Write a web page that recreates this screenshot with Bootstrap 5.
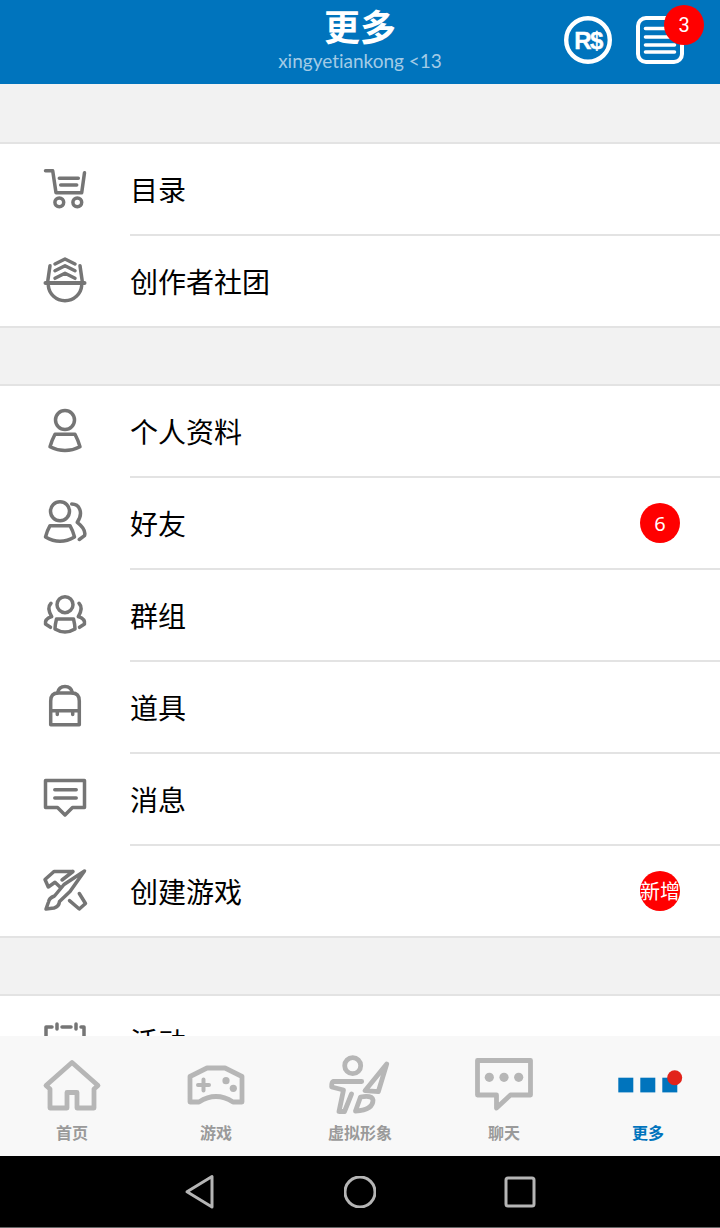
<!DOCTYPE html>
<html lang="zh-CN">
<head>
<meta charset="utf-8">
<title>更多</title>
<link href="https://cdn.jsdelivr.net/npm/bootstrap@5.3.0/dist/css/bootstrap.min.css" rel="stylesheet">
<style>
html,body{height:100%;overflow:hidden}
body{font-family:"Noto Sans CJK SC","Noto Sans",sans-serif;background:#f2f2f2;color:#000}
.app-shell{height:1228px}
.app-head{height:84px;background:#0074bd;color:#fff;flex:none;grid-template-columns:1fr auto 1fr}
.head-title{font-size:36px;font-weight:700;line-height:40px;margin-top:5px}
.head-sub{font-family:"Lato","Noto Sans",sans-serif;font-size:19px;line-height:26px;color:#a3cbe6;margin-top:3px;font-variant-ligatures:none}
.head-tools{padding-right:36px;gap:24px;padding-top:16px}
.coin-ico{display:block}
.notes-wrap{width:48px;height:48px}
.red-dot{position:absolute;width:40px;height:40px;border-radius:50%;background:#f00;color:#fff;right:-20px;top:-11px;font:20px/40px "Roboto",sans-serif;text-align:center}
.scroll-area{flex:1 1 0;min-height:0;overflow:hidden}
.gap-band{height:58px}
.sheet{background:#fff;border-top:2px solid #e3e3e3;border-bottom:2px solid #e3e3e3}
.sheet+.gap-band{height:56px}
.sheet-row{height:90px}
.sheet-row+.sheet-row{height:92px}
.sheet-row+.sheet-row .row-body{border-top:2px solid #e3e3e3}
.row-ico{width:130px;flex:none;padding-left:41px}
.row-body{font-size:28px;line-height:40px;padding-right:40px}
.row-ico svg,.tab-ico svg{display:block;fill:none;stroke-linecap:round;stroke-linejoin:round;overflow:visible}
.row-ico svg{stroke:#757575;stroke-width:3.5}
.count-pill{width:40px;height:40px;border-radius:50%;background:#f00;color:#fff;font:20px/42px "Noto Sans",sans-serif;text-align:center;overflow:hidden;white-space:nowrap}
.count-pill.new-pill{font-family:"Noto Sans CJK SC",sans-serif;line-height:40px}
.tab-strip{height:120px;background:#f8f8f8;flex:none}
.tab-item{flex:1 1 0;color:#9a9a9a;font-size:16px;font-weight:700;line-height:24px}
.tab-item.is-on{color:#0074bd}
.tab-ico{height:64px;margin-top:18px;margin-bottom:2px}
.tab-ico svg{stroke:#b6b6b6;stroke-width:4.8}
.sys-bar{height:72px;background:#000;border-bottom:1px solid #666;flex:none}
.sys-cell{width:160px}
.sys-bar svg{display:block;fill:none;stroke:#b5b5b5;stroke-width:3;stroke-linejoin:round}
</style>
</head>
<body>
<div class="app-shell d-flex flex-column">
  <header class="app-head d-grid">
    <div></div>
    <div class="text-center">
      <div class="head-title">更多</div>
      <div class="head-sub">xingyetiankong &lt;13</div>
    </div>
    <div class="d-flex justify-content-end align-items-start head-tools">
      <svg class="coin-ico" width="48" height="48" viewBox="0 0 48 48">
        <circle cx="24" cy="24" r="21.8" fill="none" stroke="#fff" stroke-width="4.4"/>
        <text x="24" y="32.5" text-anchor="middle" font-family="Liberation Sans" font-weight="700" font-size="24" letter-spacing="-1.5" fill="#fff" stroke="#fff" stroke-width=".4">R$</text>
      </svg>
      <div class="notes-wrap position-relative">
        <svg width="48" height="48" viewBox="0 0 48 48" fill="none" stroke="#fff" stroke-linecap="round">
          <rect x="2" y="2" width="44" height="44" rx="8" stroke-width="4"/>
          <path d="M9.5 12.5H38.5M9.5 21H38.5M9.5 29H38.5M9.5 36H38.5" stroke-width="3.6"/>
        </svg>
        <span class="red-dot">3</span>
      </div>
    </div>
  </header>

  <main class="scroll-area">
    <div class="gap-band"></div>
    <section class="sheet">
      <div class="sheet-row d-flex">
        <div class="row-ico d-flex align-items-center"><svg width="48" height="48" viewBox="0 0 48 48"><path d="M4.5 5.7H11.7L15 27.7H40.7L43.5 7.7"/><path d="M18.3 13.3H37.3M19.7 20H35.7"/><circle cx="18.3" cy="37.3" r="4.4"/><circle cx="36.3" cy="37.3" r="4.4"/></svg></div>
        <div class="row-body flex-grow-1 d-flex align-items-center">目录</div>
      </div>
      <div class="sheet-row d-flex">
        <div class="row-ico d-flex align-items-center"><svg width="48" height="48" viewBox="0 0 48 48"><path d="M4.5 27H43.5" stroke-width="4"/><path d="M7.3 29.7C8 38 15 44.7 24 44.7S40 38 40.7 29.7"/><path d="M9 9.7L6.8 24.7M39 9.7L41.2 24.7M14 8L24 3L34 8M14 14.7L24 9.7L34 14.7M14 22.3L24 17.3L34 22.3"/></svg></div>
        <div class="row-body flex-grow-1 d-flex align-items-center">创作者社团</div>
      </div>
    </section>
    <div class="gap-band"></div>
    <section class="sheet">
      <div class="sheet-row d-flex">
        <div class="row-ico d-flex align-items-center"><svg width="48" height="48" viewBox="0 0 48 48"><circle cx="24" cy="13" r="9.5"/><path d="M14 27.3H34Q37 33 39 39.7Q24 47.5 9 39.7Q11 33 14 27.3Z"/></svg></div>
        <div class="row-body flex-grow-1 d-flex align-items-center">个人资料</div>
      </div>
      <div class="sheet-row d-flex">
        <div class="row-ico d-flex align-items-center"><svg width="48" height="48" viewBox="0 0 48 48"><circle cx="19" cy="13.3" r="9.5"/><path d="M9 27.7H29Q32 33 33.5 39Q19 47.5 4.5 39Q6 33 9 27.7Z"/><path d="M30.7 6C38 6 43 14 36.3 24.3C41 28 45 33 43.5 37.7L38.3 41.5"/></svg></div>
        <div class="row-body flex-grow-1 d-flex align-items-center justify-content-between">好友<span class="count-pill">6</span></div>
      </div>
      <div class="sheet-row d-flex">
        <div class="row-ico d-flex align-items-center"><svg width="48" height="48" viewBox="0 0 48 48"><circle cx="24" cy="14.7" r="8"/><path d="M15.5 29H32.5Q34 35 34 39Q24 45 14 39Q14 35 15.5 29Z"/><path d="M10 13.3Q5.5 18 10.7 26.7Q3.5 29 4.5 34L9.5 37.3M38 13.3Q42.5 18 37.3 26.7Q44.5 29 43.5 34L38.5 37.3"/></svg></div>
        <div class="row-body flex-grow-1 d-flex align-items-center">群组</div>
      </div>
      <div class="sheet-row d-flex">
        <div class="row-ico d-flex align-items-center"><svg width="48" height="48" viewBox="0 0 48 48"><path d="M9.7 19Q9.7 11 17 11H31Q38.3 11 38.3 19V42.7H9.7Z"/><path d="M9.7 28.7H38.3M16.3 28.7V32.5M31.7 28.7V32.5"/><path d="M16.5 11C17.5 6 21 4.5 24 4.5S30.5 6 31.5 11"/></svg></div>
        <div class="row-body flex-grow-1 d-flex align-items-center">道具</div>
      </div>
      <div class="sheet-row d-flex">
        <div class="row-ico d-flex align-items-center"><svg width="48" height="48" viewBox="0 0 48 48"><path d="M4.5 6.5H43.5V33.5H31.5L24 41L16.5 33.5H4.5Z"/><path d="M13.8 15.7H35.2M13.8 24H35.2"/></svg></div>
        <div class="row-body flex-grow-1 d-flex align-items-center">消息</div>
      </div>
      <div class="sheet-row d-flex">
        <div class="row-ico d-flex align-items-center"><svg width="48" height="48" viewBox="0 0 48 48"><path d="M43.5 5L23 18.5L13.5 30Q8 32 7.5 36L5 43L13 42Q18 40.5 18.5 35.5L29 25.5Z"/><path d="M32 5.5H13L4 13.5L7.3 21L14 16.3L19 21M32 5.5L21 14M38.3 27.5L44.5 37.5L38.3 43L28.5 34.7"/></svg></div>
        <div class="row-body flex-grow-1 d-flex align-items-center justify-content-between">创建游戏<span class="count-pill new-pill">新增</span></div>
      </div>
    </section>
    <div class="gap-band"></div>
    <section class="sheet">
      <div class="sheet-row d-flex">
        <div class="row-ico d-flex align-items-center"><svg width="48" height="48" viewBox="0 0 48 48"><path d="M5 24V10H11M21 10H30M40 10H43V24M16 7V12M35 7V12"/></svg></div>
        <div class="row-body flex-grow-1 d-flex align-items-center">活动</div>
      </div>
    </section>
  </main>

  <nav class="tab-strip d-flex">
    <div class="tab-item d-flex flex-column align-items-center">
      <div class="tab-ico"><svg width="64" height="64" viewBox="0 0 64 64"><path d="M32 8.5L6 31.5L10 35V54H27V38.5H37V54H54V35L58 31.5Z"/></svg></div>首页</div>
    <div class="tab-item d-flex flex-column align-items-center">
      <div class="tab-ico"><svg width="64" height="64" viewBox="0 0 64 64"><path d="M23 14H41L58 22.5V48H49Q32 37 15 48H6V22.5Z"/><path d="M14 31H25M19.5 25.5V36.5" stroke-width="4"/><g fill="#b6b6b6" stroke="none"><circle cx="42" cy="26.7" r="3.6"/><circle cx="49.3" cy="34.3" r="3.6"/></g></svg></div>游戏</div>
    <div class="tab-item d-flex flex-column align-items-center">
      <div class="tab-ico"><svg width="64" height="64" viewBox="0 0 64 64"><circle cx="24.7" cy="11.7" r="8"/><path d="M33.7 27.5H5Q3.5 28 3.7 33L15.5 36L11 57.5H16.5L23.5 40"/><path d="M58.7 10L37 36.7L50.3 37.7Z"/><path d="M27.5 57L32.5 43Q44 41 45 46Q45 56 27.5 57Z"/></svg></div>虚拟形象</div>
    <div class="tab-item d-flex flex-column align-items-center">
      <div class="tab-ico"><svg width="64" height="64" viewBox="0 0 64 64"><path d="M5.5 6.5H58.5V41H38.5L24.5 54V41H5.5Z"/><g fill="#b6b6b6" stroke="none"><circle cx="17.3" cy="23.3" r="4.6"/><circle cx="32" cy="23.3" r="4.6"/><circle cx="46.7" cy="23.3" r="4.6"/></g></svg></div>聊天</div>
    <div class="tab-item is-on d-flex flex-column align-items-center">
      <div class="tab-ico"><svg width="64" height="64" viewBox="0 0 64 64"><g fill="#0074bd" stroke="none"><rect x="2.3" y="23.7" width="15" height="14.7"/><rect x="24.3" y="23.7" width="15" height="14.7"/><rect x="46.3" y="23.7" width="15" height="14.7"/><circle cx="58.7" cy="23.7" r="7.5" fill="#e2231a"/></g></svg></div>更多</div>
  </nav>

  <footer class="sys-bar d-flex justify-content-center align-items-center">
    <div class="sys-cell d-flex justify-content-center"><svg width="32" height="36" viewBox="0 0 32 36"><path d="M3 17.7L28 2.5V33Z"/></svg></div>
    <div class="sys-cell d-flex justify-content-center"><svg width="32" height="32" viewBox="0 0 32 32"><circle cx="16" cy="16" r="15"/></svg></div>
    <div class="sys-cell d-flex justify-content-center"><svg width="32" height="32" viewBox="0 0 32 32"><rect x="2" y="2" width="28" height="28" rx="2"/></svg></div>
  </footer>
</div>
<script src="https://cdn.jsdelivr.net/npm/bootstrap@5.3.0/dist/js/bootstrap.bundle.min.js"></script>
</body>
</html>
